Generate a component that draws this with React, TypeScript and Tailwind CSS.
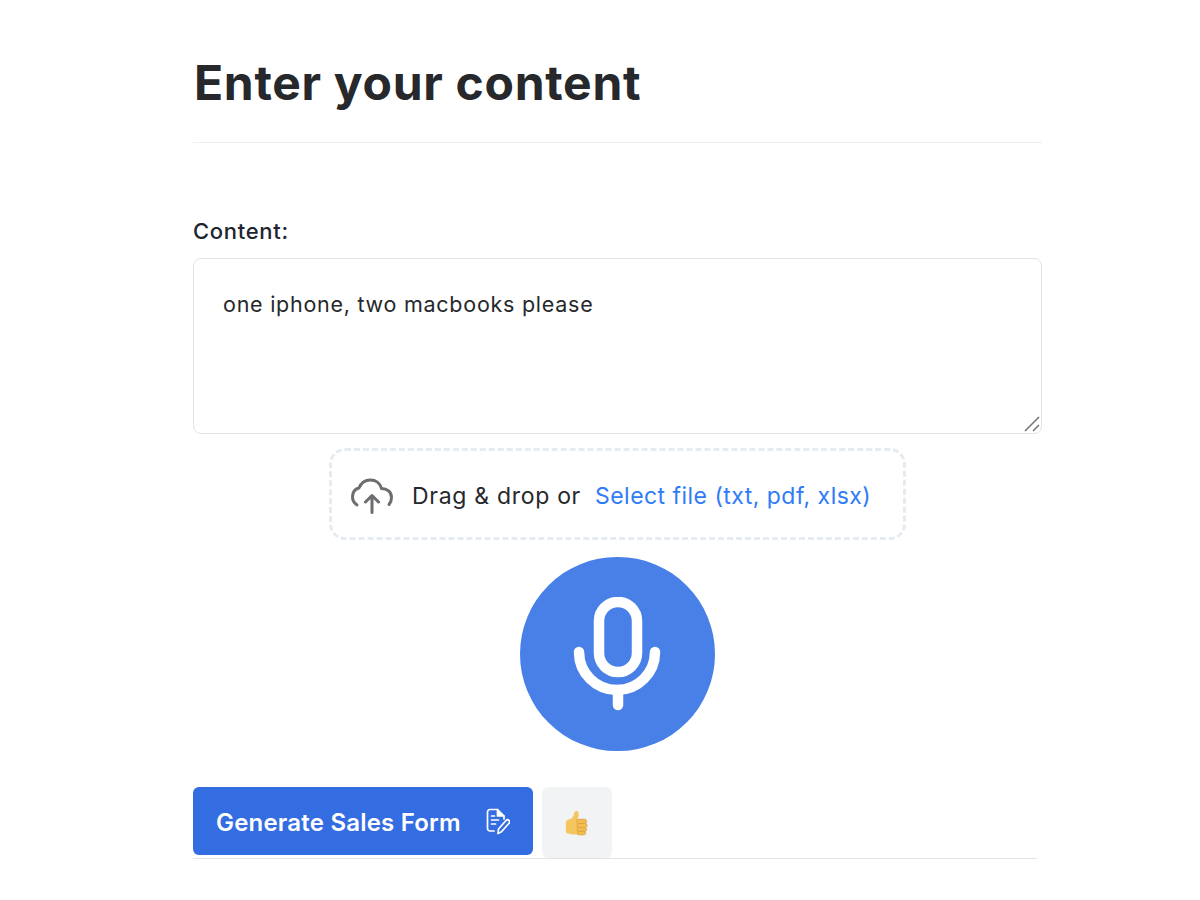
function UploadIcon() {
  return (
    <svg width="42" height="36" viewBox="0 0 42 36" fill="none" stroke="#6b6d70" strokeWidth="3" strokeLinecap="round" strokeLinejoin="round">
      <path d="M6 27C3 25 1.500 22 1.500 19c0-4.500 2.500-8 6.500-9C10 5 14.500 2 19.500 2c5 0 9.500 3 11 8.500 5.500 0 10 3.500 10 9 0 2.500-1 5-2.500 7" />
      <path d="M21 34.500V18M14.500 24l6.500-6.500 6.500 6.500" />
    </svg>
  );
}

function FormIcon() {
  return (
    <svg width="24" height="27" viewBox="0 0 24 27" fill="none" stroke="#ffffff" strokeWidth="1.700" strokeLinecap="round" strokeLinejoin="round">
      <path d="M8 23H4A2.500 2.500 0 0 1 1.500 20.500V4A2.500 2.500 0 0 1 4 1.500H11.500L18 8V11" />
      <path d="M11.500 1.500V8H18" fill="#ffffff" />
      <path d="M5.500 8h3M5.500 12h7M5.500 16h4" />
      <path d="M12 25.500l.5-4.500 7.500-8.500a2 2 0 0 1 3 2.800l-7.500 8.500z" />
    </svg>
  );
}

function ThumbIcon() {
  return (
    <svg width="24" height="26" viewBox="0 0 26 27">
      <path d="M2 13c0-1.500 1-2.500 2.500-3L8 8.500c1.500-1 2.500-3 3-5.500.3-1.500 1.200-2.500 2.500-2.500 1.500 0 2.500 1.300 2.500 3.200 0 2-.6 4-1.500 6.300H21v16H9c-2 0-2.800-.8-4-.8-2 0-3-1.200-3-2.700z" fill="#f5c65f" />
      <rect x="13.500" y="9.500" width="11" height="4.500" rx="2.200" fill="#f3bd52" stroke="#d99f3c" strokeWidth=".8" />
      <rect x="14" y="14" width="11" height="4.500" rx="2.200" fill="#f3bd52" stroke="#d99f3c" strokeWidth=".8" />
      <rect x="14" y="18.500" width="10.500" height="4" rx="2" fill="#f3bd52" stroke="#d99f3c" strokeWidth=".8" />
      <rect x="14.500" y="22.500" width="9" height="3.800" rx="1.900" fill="#f3bd52" stroke="#d99f3c" strokeWidth=".8" />
    </svg>
  );
}

function MicIcon() {
  return (
    <svg width="98" height="114" viewBox="0 0 98 114" fill="none" stroke="#ffffff" strokeWidth="10.500" strokeLinecap="round">
      <rect x="30" y="5" width="38" height="70" rx="19" />
      <path d="M10 55a38 38 0 0 0 76 0" />
      <path d="M49 93V108" />
    </svg>
  );
}

export default function App() {
  return (
    <div className="min-h-[900px] bg-white font-['Inter','Liberation_Sans',sans-serif] text-[#26282b]">
      <div className="w-[849px] ml-[193px] pt-[54px]">
        <h1 className="pl-px text-[48px] leading-[58px] font-bold tracking-[0.7px]">Enter your content</h1>
        <div className="mt-[30px] h-px bg-[#eeeff0]" />

        <label className="block mt-[75px] text-[22px] leading-[26px] font-medium tracking-[0.7px] text-[#20242e]">Content:</label>
        <div className="relative mt-[14px] h-[176px] rounded-[8px] border border-[#e2e3e5] pl-[29px] pt-[30px] text-[21.500px] leading-[30px] tracking-[0.74px]">
          one iphone, two macbooks please
          <svg className="absolute right-0 bottom-0" width="18" height="18" viewBox="0 0 18 18" stroke="#737373" strokeWidth="1.500">
            <path d="M2 16L16 2M10 16l6-6" />
          </svg>
        </div>

        <div className="flex justify-center mt-[14px]">
          <div className="flex items-center h-[92px] w-[577px] rounded-[16px] border-[3px] border-dashed border-[#e6ebf2] pl-[19px] pt-[4px] text-[23px]">
            <UploadIcon />
            <span className="ml-[19px] tracking-[0.7px]">Drag &amp; drop or</span>
            <span className="ml-[14px] tracking-[0.47px] text-[#2f7cf6]">Select file (txt, pdf, xlsx)</span>
          </div>
        </div>

        <div className="flex justify-center mt-[17px]">
          <div className="flex items-center justify-center w-[195px] h-[194px] rounded-full bg-[#4880e8]">
            <MicIcon />
          </div>
        </div>

        <div className="flex mt-[36px] w-[844px] border-b border-[#e2e3e5] gap-[9px]">
          <button className="flex items-center h-[68px] w-[340px] rounded-[6px] bg-[#346ce2] pl-[23px] pt-[4px] text-white text-[24px] font-semibold tracking-[0.2px]">
            <span>Generate Sales Form</span>
            <span className="ml-[25px] -mt-[3px]"><FormIcon /></span>
          </button>
          <button className="flex items-center justify-center h-[71px] w-[70px] rounded-[6px] bg-[#f2f3f5] pr-[2px]">
            <ThumbIcon />
          </button>
        </div>
      </div>
    </div>
  );
}
